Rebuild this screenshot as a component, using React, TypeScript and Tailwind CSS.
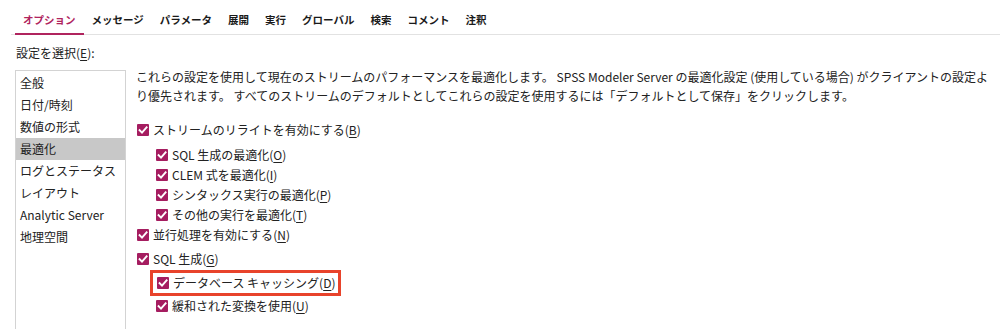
import React from 'react';

const font = { fontFamily: '"Noto Sans CJK JP", "Noto Sans", sans-serif' };

const tabs = ['オプション', 'メッセージ', 'パラメータ', '展開', '実行', 'グローバル', '検索', 'コメント', '注釈'];

const items = ['全般', '日付/時刻', '数値の形式', '最適化', 'ログとステータス', 'レイアウト', 'Analytic Server', '地理空間'];

function Check() {
    return (
        <span className="flex h-[12px] w-[12px] shrink-0 items-center justify-center rounded-[1px] bg-[#a51d60]">
            <svg viewBox="0 0 12 12" className="h-[12px] w-[12px]">
                <path d="M2.6 6.2 L5 8.6 L9.6 3.4" fill="none" stroke="#fff" strokeWidth="1.9" strokeLinecap="square" />
            </svg>
        </span>
    );
}

// label text with the mnemonic letter underlined
function Label({ text, k }: { text: string; k: string }) {
    return (
        <span className="whitespace-nowrap">
            {text}(<span className="underline underline-offset-2">{k}</span>)
        </span>
    );
}

function Row({ text, k, sub, className = '' }: { text: string; k: string; sub?: boolean; className?: string }) {
    return (
        <div className={`flex h-[20px] items-center gap-[4px] ${sub ? 'pl-[20px]' : 'pl-[1px]'} ${className}`}>
            <Check />
            <Label text={text} k={k} />
        </div>
    );
}

export default function App() {
    return (
        <div className="h-[329px] w-[1000px] overflow-hidden bg-white text-[12px] text-[#222]" style={font}>
            {/* tab strip */}
            <div className="ml-[11px] flex h-[35px] items-end border-b border-[#e2e2e2] pl-[4px]">
                {tabs.map((t, i) => (
                    <div
                        key={t}
                        className={`-mb-px flex h-[34px] items-center px-[8px] pt-[5px] text-[10.5px] font-bold ${
                            i === 0 ? 'border-b-2 border-[#b0245e] text-[#b0245e]' : 'border-b-2 border-transparent text-[#1a1a1a]'
                        }`}
                    >
                        {t}
                    </div>
                ))}
            </div>

            <div className="ml-[16px] mt-[9px] leading-[18px]">
                設定を選択(<span className="underline underline-offset-2">E</span>):
            </div>

            <div className="mt-[8px] flex">
                {/* category list */}
                <div className="ml-[15px] h-[300px] w-[111px] shrink-0 border border-[#d3d3d3] pt-[1px]">
                    {items.map((it) => (
                        <div
                            key={it}
                            className={`flex h-[22px] items-center pl-[4px] ${it === '最適化' ? 'bg-[#c8c8c8]' : ''}`}
                        >
                            {it}
                        </div>
                    ))}
                </div>

                {/* settings panel */}
                <div className="ml-[10px] -mt-[3px] flex flex-col">
                    <p className="whitespace-nowrap leading-[19px]">
                        これらの設定を使用して現在のストリームのパフォーマンスを最適化します。 SPSS Modeler Server の最適化設定 (使用している場合) がクライアントの設定よ
                        <br />
                        り優先されます。 すべてのストリームのデフォルトとしてこれらの設定を使用するには「デフォルトとして保存」をクリックします。
                    </p>

                    <div className="mt-[15px] flex flex-col">
                        <Row text="ストリームのリライトを有効にする" k="B" />
                        <Row text="SQL 生成の最適化" k="O" sub className="mt-[5px]" />
                        <Row text="CLEM 式を最適化" k="I" sub />
                        <Row text="シンタックス実行の最適化" k="P" sub />
                        <Row text="その他の実行を最適化" k="T" sub />
                        <Row text="並行処理を有効にする" k="N" />
                        <Row text="SQL 生成" k="G" className="mt-[4px]" />
                        <div className="ml-[14px] mt-[1px] flex h-[26px] items-center gap-[4px] self-start border-[3px] border-[#e8432b] pl-[4px] pr-[3px]">
                            <Check />
                            <Label text="データベース キャッシング" k="D" />
                        </div>
                        <Row text="緩和された変換を使用" k="U" sub className="h-[16px]" />
                    </div>
                </div>
            </div>
        </div>
    );
}
